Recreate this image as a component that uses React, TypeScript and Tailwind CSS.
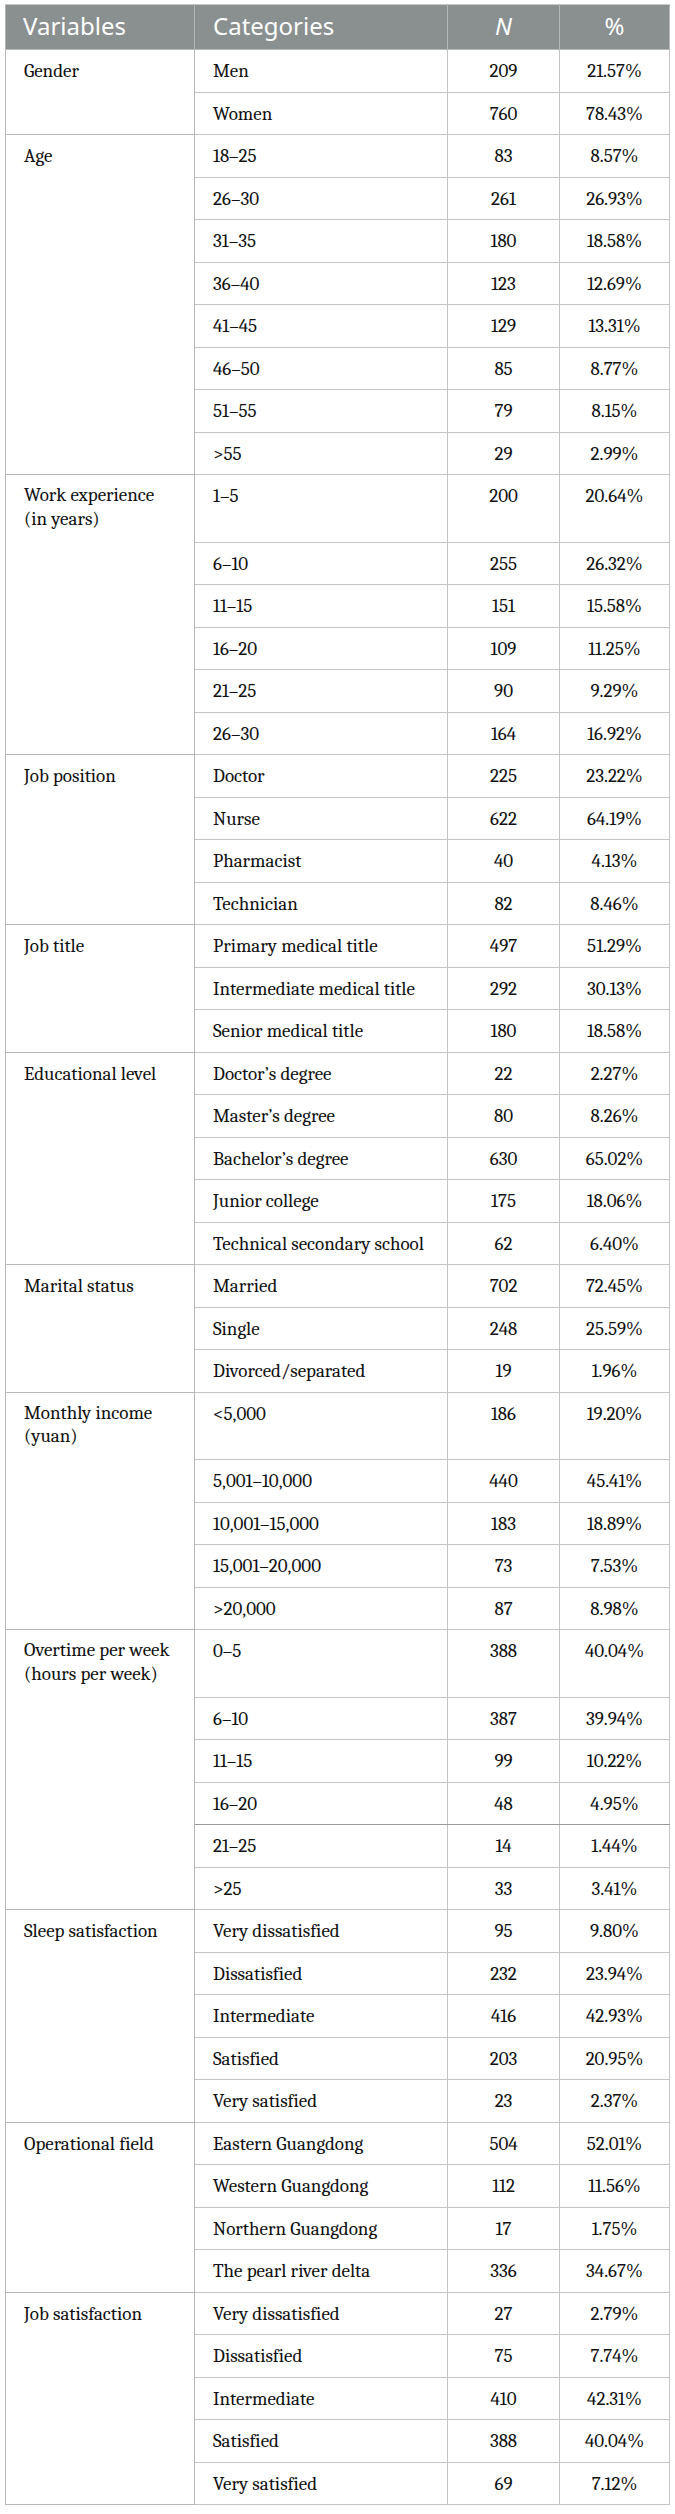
import React from "react";

type Group = { label: React.ReactNode; tall?: boolean; rows: [string, string, string][] };

const groups: Group[] = [
  { label: "Gender", rows: [["Men", "209", "21.57%"], ["Women", "760", "78.43%"]] },
  {
    label: "Age",
    rows: [
      ["18–25", "83", "8.57%"],
      ["26–30", "261", "26.93%"],
      ["31–35", "180", "18.58%"],
      ["36–40", "123", "12.69%"],
      ["41–45", "129", "13.31%"],
      ["46–50", "85", "8.77%"],
      ["51–55", "79", "8.15%"],
      [">55", "29", "2.99%"],
    ],
  },
  {
    label: (
      <>
        Work experience
        <br />
        (in years)
      </>
    ),
    tall: true,
    rows: [
      ["1–5", "200", "20.64%"],
      ["6–10", "255", "26.32%"],
      ["11–15", "151", "15.58%"],
      ["16–20", "109", "11.25%"],
      ["21–25", "90", "9.29%"],
      ["26–30", "164", "16.92%"],
    ],
  },
  {
    label: "Job position",
    rows: [
      ["Doctor", "225", "23.22%"],
      ["Nurse", "622", "64.19%"],
      ["Pharmacist", "40", "4.13%"],
      ["Technician", "82", "8.46%"],
    ],
  },
  {
    label: "Job title",
    rows: [
      ["Primary medical title", "497", "51.29%"],
      ["Intermediate medical title", "292", "30.13%"],
      ["Senior medical title", "180", "18.58%"],
    ],
  },
  {
    label: "Educational level",
    rows: [
      ["Doctor’s degree", "22", "2.27%"],
      ["Master’s degree", "80", "8.26%"],
      ["Bachelor’s degree", "630", "65.02%"],
      ["Junior college", "175", "18.06%"],
      ["Technical secondary school", "62", "6.40%"],
    ],
  },
  {
    label: "Marital status",
    rows: [
      ["Married", "702", "72.45%"],
      ["Single", "248", "25.59%"],
      ["Divorced/separated", "19", "1.96%"],
    ],
  },
  {
    label: (
      <>
        Monthly income
        <br />
        (yuan)
      </>
    ),
    tall: true,
    rows: [
      ["<5,000", "186", "19.20%"],
      ["5,001–10,000", "440", "45.41%"],
      ["10,001–15,000", "183", "18.89%"],
      ["15,001–20,000", "73", "7.53%"],
      [">20,000", "87", "8.98%"],
    ],
  },
  {
    label: (
      <>
        Overtime per week
        <br />
        (hours per week)
      </>
    ),
    tall: true,
    rows: [
      ["0–5", "388", "40.04%"],
      ["6–10", "387", "39.94%"],
      ["11–15", "99", "10.22%"],
      ["16–20", "48", "4.95%"],
      ["21–25", "14", "1.44%"],
      [">25", "33", "3.41%"],
    ],
  },
  {
    label: "Sleep satisfaction",
    rows: [
      ["Very dissatisfied", "95", "9.80%"],
      ["Dissatisfied", "232", "23.94%"],
      ["Intermediate", "416", "42.93%"],
      ["Satisfied", "203", "20.95%"],
      ["Very satisfied", "23", "2.37%"],
    ],
  },
  {
    label: "Operational field",
    rows: [
      ["Eastern Guangdong", "504", "52.01%"],
      ["Western Guangdong", "112", "11.56%"],
      ["Northern Guangdong", "17", "1.75%"],
      ["The pearl river delta", "336", "34.67%"],
    ],
  },
  {
    label: "Job satisfaction",
    rows: [
      ["Very dissatisfied", "27", "2.79%"],
      ["Dissatisfied", "75", "7.74%"],
      ["Intermediate", "410", "42.31%"],
      ["Satisfied", "388", "40.04%"],
      ["Very satisfied", "69", "7.12%"],
    ],
  },
];

export default function App() {
  return (
    <div className="min-h-[2514px] bg-white pl-[5px] pt-[4px]">
      <table className="table-fixed border-collapse w-[664px] border border-[#b8b8b8]">
        <colgroup>
          <col className="w-[189px]" />
          <col className="w-[253px]" />
          <col className="w-[112px]" />
          <col className="w-[110px]" />
        </colgroup>
        <thead>
          <tr className="bg-[#8a8f90] text-white text-[24px] leading-[33px]">
            <th className="font-sans border border-[#b4b8b9] border-t-[#c8c8c8] pl-[17px] pt-[4px] pb-[7px] text-left font-normal">
              Variables
            </th>
            <th className="font-sans border border-[#b4b8b9] border-t-[#c8c8c8] pl-[18px] pt-[4px] pb-[7px] text-left font-normal">
              Categories
            </th>
            <th className="font-sans border border-[#b4b8b9] border-t-[#c8c8c8] pt-[4px] pb-[7px] text-center font-normal italic">
              N
            </th>
            <th className="font-sans border border-[#b4b8b9] border-t-[#c8c8c8] pt-[4px] pb-[7px] text-center font-normal">
              %
            </th>
          </tr>
        </thead>
        <tbody className="font-serif text-[19px] leading-[25.5px] text-[#111]">
          {groups.map((g, gi) =>
            g.rows.map((r, ri) => {
              const first = ri === 0;
              const heavy = gi === 8 && ri === 3;
              return (
                <tr key={`${gi}-${ri}`}>
                  <td
                    className={
                      first
                        ? "font-serif align-top border-l border-r border-t border-[#b8b8b8] pl-[18px] pr-[10px] pt-[9px] pb-[7px]"
                        : "font-serif align-top border-l border-r border-t-0 border-[#b8b8b8] pl-[18px] pr-[10px] pt-[9px] pb-[7px]"
                    }
                  >
                    {first ? (
                      g.tall ? (
                        <div className="leading-[23.5px] pb-[4px]">{g.label}</div>
                      ) : (
                        g.label
                      )
                    ) : null}
                  </td>
                  <td
                    className={
                      heavy
                        ? "font-serif align-top border border-[#c4c4c4] border-b-[#9a9a9a] pl-[18px] pt-[9px] pb-[7px] whitespace-nowrap"
                        : "font-serif align-top border border-[#c4c4c4] pl-[18px] pt-[9px] pb-[7px] whitespace-nowrap"
                    }
                  >
                    {r[0]}
                  </td>
                  <td
                    className={
                      heavy
                        ? "font-serif align-top border border-[#c4c4c4] border-b-[#9a9a9a] pt-[9px] pb-[7px] text-center"
                        : "font-serif align-top border border-[#c4c4c4] pt-[9px] pb-[7px] text-center"
                    }
                  >
                    {r[1]}
                  </td>
                  <td
                    className={
                      heavy
                        ? "font-serif align-top border border-[#c4c4c4] border-b-[#9a9a9a] pt-[9px] pb-[7px] text-center"
                        : "font-serif align-top border border-[#c4c4c4] pt-[9px] pb-[7px] text-center"
                    }
                  >
                    {r[2]}
                  </td>
                </tr>
              );
            })
          )}
        </tbody>
      </table>
    </div>
  );
}
